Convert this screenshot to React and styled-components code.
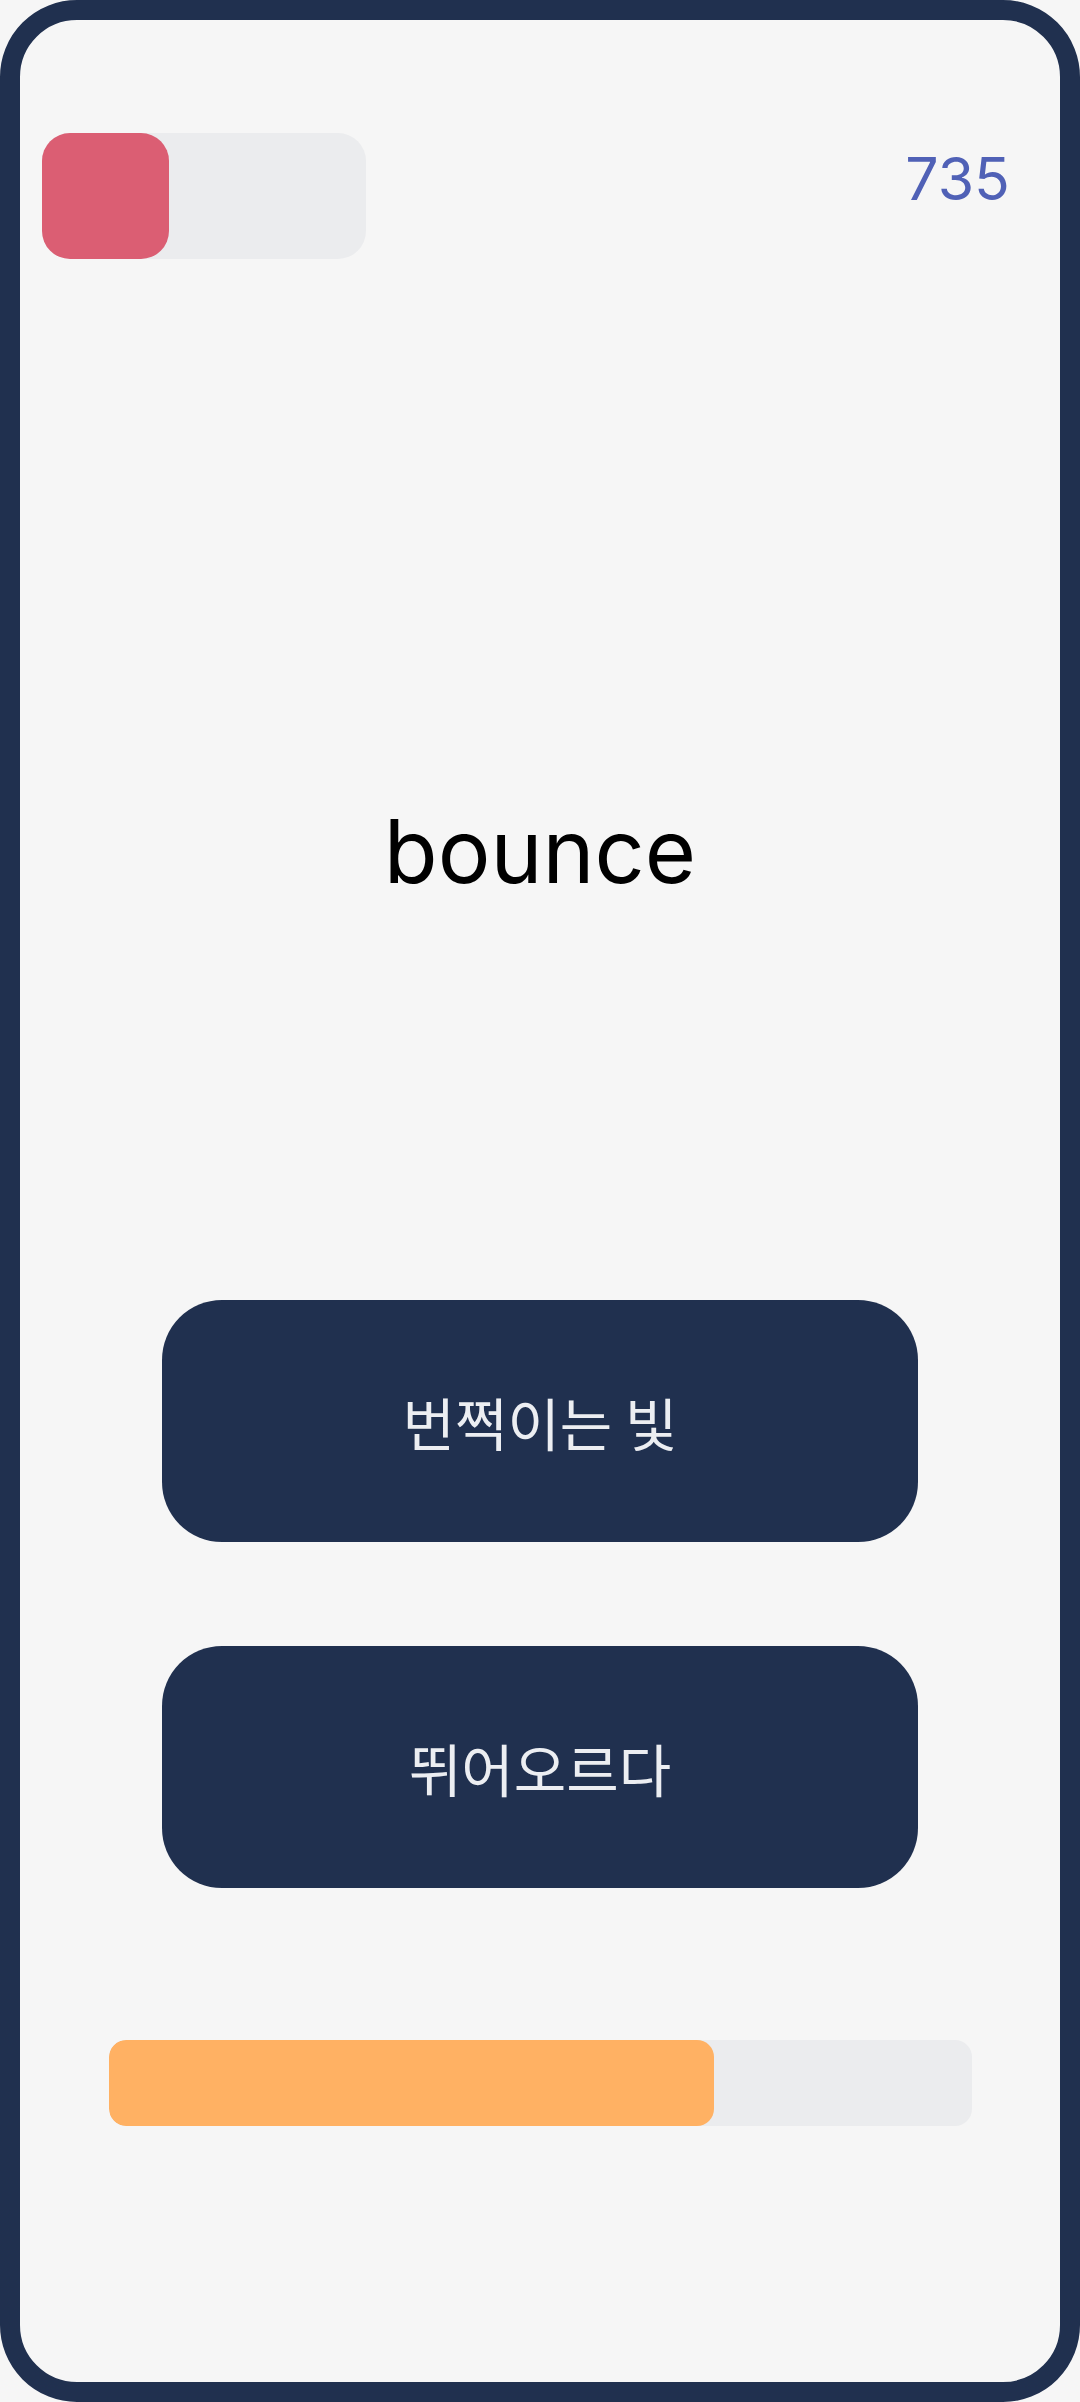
import styled, { createGlobalStyle } from 'styled-components';

const GlobalStyle = createGlobalStyle`
  html, body {
    margin: 0;
    padding: 0;
    background: #f6f6f6;
  }
  * {
    box-sizing: border-box;
  }
  body {
    font-family: 'Inter', 'Noto Sans CJK KR', sans-serif;
  }
`;

const Frame = styled.div`
  min-height: 100vh;
  border: 20px solid #20304f;
  border-radius: 77px;
  background-color: #f6f6f6;
  display: flex;
  flex-direction: column;
  align-items: stretch;
`;

const Header = styled.header`
  display: flex;
  justify-content: space-between;
  align-items: flex-start;
  padding: 113px 22px 0 22px;
`;

const Toggle = styled.div`
  width: 324px;
  height: 126px;
  border-radius: 28px;
  background-color: #ebecee;
  display: flex;
  justify-content: ${(props) => (props.$on ? 'flex-end' : 'flex-start')};
`;

const Knob = styled.div`
  width: 127px;
  height: 126px;
  border-radius: 28px;
  background-color: #db5e73;
`;

const Score = styled.span`
  font-family: 'Inter', sans-serif;
  font-size: 59px;
  line-height: 1;
  color: #5061b6;
  margin-top: 16px;
  margin-right: 28px;
`;

const Word = styled.h1`
  margin: 548px 0 0 0;
  font-family: 'Inter', sans-serif;
  font-weight: 400;
  font-size: 88px;
  line-height: 1;
  color: #000;
  text-align: center;
`;

const Choices = styled.div`
  display: flex;
  flex-direction: column;
  align-items: center;
  gap: 104px;
  margin-top: 405px;
`;

const Choice = styled.button`
  width: 756px;
  height: 242px;
  border: none;
  border-radius: 60px;
  background-color: #20304f;
  color: #eceef2;
  font-family: 'Noto Sans CJK KR', 'Inter', sans-serif;
  font-size: 57px;
  font-weight: 400;
  display: flex;
  align-items: center;
  justify-content: center;
  cursor: pointer;
`;

const Progress = styled.div`
  width: 863px;
  height: 86px;
  margin: 152px auto 0 auto;
  border-radius: 17px;
  background-color: #ebecee;
  overflow: hidden;
`;

const ProgressFill = styled.div`
  height: 100%;
  border-radius: 17px;
  background-color: #ffb163;
`;

const choices = ['번쩍이는 빛', '뛰어오르다'];

function App() {
  const progress = 605 / 863;

  return (
    <>
      <GlobalStyle />
      <Frame>
        <Header>
          <Toggle>
            <Knob />
          </Toggle>
          <Score>735</Score>
        </Header>
        <Word>bounce</Word>
        <Choices>
          {choices.map((text) => (
            <Choice key={text}>{text}</Choice>
          ))}
        </Choices>
        <Progress>
          <ProgressFill style={{ width: `${progress * 100}%` }} />
        </Progress>
      </Frame>
    </>
  );
}

export default App;
